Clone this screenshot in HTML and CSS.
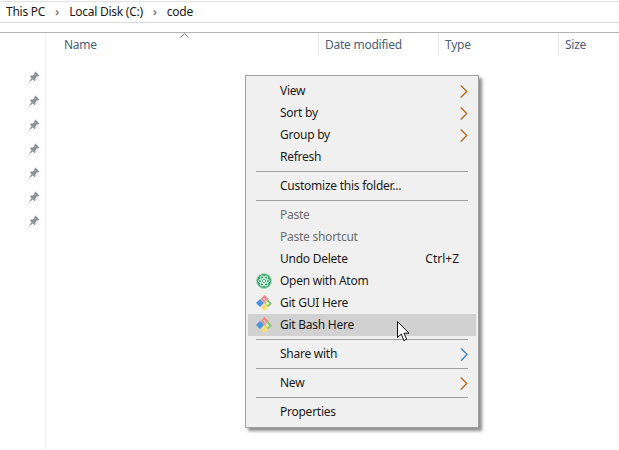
FILE: index.html
```html
<!DOCTYPE html>
<html lang="en">
<head>
    <meta charset="UTF-8">
    <meta name="viewport" content="width=device-width, initial-scale=1.0">
    <title>code</title>
    <link rel="stylesheet" href="styles.css">
</head>
<body>
    <svg class="defs" width="0" height="0">
        <defs>
            <symbol id="chevron" viewBox="0 0 8 13">
                <path d="M1.3 0.5 L7.3 6.5 L1.3 12.5" fill="none" stroke="#5aa5e6" stroke-width="0.7"/>
                <path d="M0.7 0.5 L6.7 6.5 L0.7 12.5" fill="none" stroke="#c2660a" stroke-width="1.1"/>
            </symbol>
            <symbol id="chevron-blue" viewBox="0 0 8 13">
                <path d="M0.7 0.5 L6.7 6.5 L0.7 12.5" fill="none" stroke="#c98a4a" stroke-width="0.7"/>
                <path d="M1.3 0.5 L7.3 6.5 L1.3 12.5" fill="none" stroke="#2f7fc8" stroke-width="1.1"/>
            </symbol>
            <symbol id="pin" viewBox="0 0 12 12">
                <path d="M7.4 0.6 L11.4 4.6 L10.4 5.6 L9.2 5.2 L7.4 7.4 L7.6 9.2 L6.6 10 L2 5.4 L2.8 4.4 L4.6 4.6 L6.8 2.8 L6.4 1.6 Z" fill="#8a9398"/>
                <path d="M3.4 7 L0.8 11.2 L5 8.6 Z" fill="#8a9398"/>
            </symbol>
            <symbol id="git" viewBox="0 0 16 16">
                <path d="M8.5 0 L12.5 4 L8.5 8 L4.5 4 Z" fill="#f28b82"/>
                <path d="M12 4.5 L16 8.5 L12 12.5 L8 8.5 Z" fill="#86c765"/>
                <path d="M8.5 8 L12.5 12 L8.5 16 L4.5 12 Z" fill="#f7dc7c"/>
                <path d="M4 4 L8 8 L4 12 L0 8 Z" fill="#4b94e0"/>
                <path d="M7.5 3 L11.5 8.5" fill="none" stroke="#fff" stroke-width="0.9"/>
                <circle cx="11.5" cy="8.5" r="1.2" fill="#fff"/>
            </symbol>
        </defs>
    </svg>

    <nav class="breadcrumb">
        <span>This PC</span>
        <span class="crumb-sep">&#8250;</span>
        <span>Local Disk (C:)</span>
        <span class="crumb-sep">&#8250;</span>
        <span>code</span>
    </nav>
    <div class="search-gap"></div>

    <div class="explorer">
        <aside class="quick-access">
            <svg class="pin"><use href="#pin"/></svg>
            <svg class="pin"><use href="#pin"/></svg>
            <svg class="pin"><use href="#pin"/></svg>
            <svg class="pin"><use href="#pin"/></svg>
            <svg class="pin"><use href="#pin"/></svg>
            <svg class="pin"><use href="#pin"/></svg>
            <svg class="pin"><use href="#pin"/></svg>
        </aside>
        <div class="file-list">
            <div class="columns">
                <div class="col col-name">
                    Name
                    <svg class="sort-arrow" width="9" height="5" viewBox="0 0 9 5"><path d="M0.5 4.5 L4.5 0.7 L8.5 4.5" fill="none" stroke="#777" stroke-width="1"/></svg>
                </div>
                <div class="col col-date">Date modified</div>
                <div class="col col-type">Type</div>
                <div class="col col-size">Size</div>
            </div>
        </div>
    </div>

    <ul class="menu">
        <li class="item"><span class="label">View</span><svg class="chevron"><use href="#chevron"/></svg></li>
        <li class="item"><span class="label">Sort by</span><svg class="chevron"><use href="#chevron"/></svg></li>
        <li class="item"><span class="label">Group by</span><svg class="chevron"><use href="#chevron"/></svg></li>
        <li class="item"><span class="label">Refresh</span></li>
        <li class="sep"></li>
        <li class="item"><span class="label">Customize this folder...</span></li>
        <li class="sep"></li>
        <li class="item disabled"><span class="label">Paste</span></li>
        <li class="item disabled"><span class="label">Paste shortcut</span></li>
        <li class="item"><span class="label">Undo Delete</span><span class="shortcut">Ctrl+Z</span></li>
        <li class="item">
            <svg class="item-icon" viewBox="0 0 16 16">
                <circle cx="8" cy="8" r="7.5" fill="#3fa873" stroke="#a5dcbb" stroke-width="1"/>
                <g fill="none" stroke="#d8f3e2" stroke-width="0.9">
                    <ellipse cx="8" cy="8" rx="5.6" ry="2.3"/>
                    <ellipse cx="8" cy="8" rx="5.6" ry="2.3" transform="rotate(60 8 8)"/>
                    <ellipse cx="8" cy="8" rx="5.6" ry="2.3" transform="rotate(120 8 8)"/>
                </g>
                <circle cx="8" cy="8" r="1.2" fill="#eafaf0"/>
            </svg>
            <span class="label">Open with Atom</span>
        </li>
        <li class="item">
            <svg class="item-icon"><use href="#git"/></svg>
            <span class="label">Git GUI Here</span>
        </li>
        <li class="item active">
            <svg class="item-icon"><use href="#git"/></svg>
            <span class="label">Git Bash Here</span>
        </li>
        <li class="sep"></li>
        <li class="item"><span class="label">Share with</span><svg class="chevron"><use href="#chevron-blue"/></svg></li>
        <li class="sep"></li>
        <li class="item"><span class="label">New</span><svg class="chevron"><use href="#chevron"/></svg></li>
        <li class="sep"></li>
        <li class="item"><span class="label">Properties</span></li>
    </ul>

    <svg class="cursor" width="14" height="21" viewBox="0 0 14 21">
        <path d="M0.5 0.5 L0.5 16.5 L4.3 13 L6.8 19.5 L9.6 18.3 L7 12.2 L12 12.2 Z" fill="#fff" stroke="#111" stroke-width="1"/>
    </svg>
</body>
</html>
```

FILE: styles.css
```css
* {
    box-sizing: border-box;
}

body {
    margin: 0;
    height: 450px;
    overflow: hidden;
    background-color: #fff;
    font-family: "Noto Sans", Arial, sans-serif;
    font-size: 12px;
    letter-spacing: -0.25px;
    color: #1a1a1a;
}

.defs {
    display: block;
}

.breadcrumb {
    display: flex;
    align-items: center;
    height: 22px;
    margin-top: 1px;
    padding: 0 0 2px 6px;
    border-top: 1px solid #e3e3e3;
    border-bottom: 1px solid #d9d9d9;
    color: #1a1a1a;
}

.crumb-sep {
    width: 24px;
    text-align: center;
    font-weight: bold;
    color: #888;
}

.search-gap {
    height: 10px;
    border-bottom: 1px solid #b4b4b4;
    box-sizing: content-box;
    margin-top: -1px;
}

.explorer {
    display: flex;
    height: 417px;
}

.quick-access {
    display: flex;
    flex-direction: column;
    align-items: flex-end;
    gap: 12px;
    width: 46px;
    padding: 38px 5px 0 0;
    border-right: 1px solid #f2f2f2;
}

.pin {
    width: 12px;
    height: 12px;
}

.file-list {
    flex: 1;
}

.columns {
    display: flex;
    height: 23px;
    color: #4c607a;
}

.col {
    position: relative;
    display: flex;
    align-items: center;
    padding-left: 6px;
    border-right: 1px solid #e5e5e5;
}

.col-name {
    width: 273px;
    padding-left: 18px;
}

.col-date,
.col-type {
    width: 120px;
}

.col-size {
    border-right: none;
}

.sort-arrow {
    position: absolute;
    top: 0;
    left: 134px;
}

.menu {
    position: absolute;
    top: 75px;
    left: 245px;
    width: 234px;
    margin: 0;
    padding: 4px 2px;
    list-style: none;
    background-color: #f0f0f0;
    border: 1px solid #a0a0a0;
    box-shadow: 3px 3px 3px rgba(0, 0, 0, 0.45);
}

.item {
    position: relative;
    display: flex;
    align-items: center;
    justify-content: space-between;
    height: 22px;
    padding: 0 8px 0 32px;
}

.label,
.shortcut {
    margin-bottom: 1px;
}

.active {
    background-color: #d1d1d1;
}

.disabled {
    color: #6d6d6d;
}

.item-icon {
    position: absolute;
    top: 3px;
    left: 8px;
    width: 16px;
    height: 16px;
}

.shortcut {
    margin-right: 9px;
    letter-spacing: 0;
}

.chevron {
    width: 8px;
    height: 13px;
}

.sep {
    height: 1px;
    margin: 3px 8px;
    background-color: #a0a0a0;
}

.cursor {
    position: absolute;
    top: 321px;
    left: 397px;
}
```
